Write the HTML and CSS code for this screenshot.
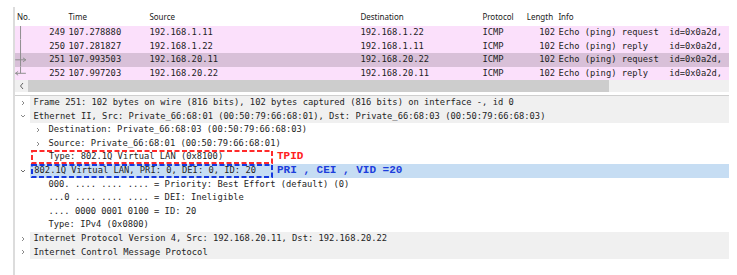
FILE: index.html
```html
<!DOCTYPE html>
<html lang="en">
<head>
  <meta charset="UTF-8">
  <title>Wireshark - 802.1Q frame</title>
  <link rel="stylesheet" href="styles.css">
</head>
<body>

<div class="capture">

  <!-- Packet list -->
  <div class="plist">
    <div class="prow phead">
      <span class="c-no">No.</span>
      <span class="c-time">Time</span>
      <span class="c-src">Source</span>
      <span class="c-dst">Destination</span>
      <span class="c-proto">Protocol</span>
      <span class="c-len">Length</span>
      <span class="c-info">Info</span>
    </div>

    <div class="prow pkt">
      <span class="c-no"><svg class="rel" width="14" height="14" viewBox="0 0 14 14"><path d="M5.5 0V14" stroke="#8c8c8c" stroke-width="1"/></svg>249</span>
      <span class="c-time">107.278880</span>
      <span class="c-src">192.168.1.11</span>
      <span class="c-dst">192.168.1.22</span>
      <span class="c-proto">ICMP</span>
      <span class="c-len">102</span>
      <span class="c-info">Echo (ping) request  id=0x0a2d,</span>
    </div>
    <div class="prow pkt">
      <span class="c-no"><svg class="rel" width="14" height="14" viewBox="0 0 14 14"><path d="M5.5 0V14" stroke="#8c8c8c" stroke-width="1"/></svg>250</span>
      <span class="c-time">107.281827</span>
      <span class="c-src">192.168.1.22</span>
      <span class="c-dst">192.168.1.11</span>
      <span class="c-proto">ICMP</span>
      <span class="c-len">102</span>
      <span class="c-info">Echo (ping) reply    id=0x0a2d,</span>
    </div>
    <div class="prow pkt current">
      <span class="c-no"><svg class="rel" width="14" height="14" viewBox="0 0 14 14"><path d="M5.5 0V14M0 7H11" stroke="#8c8c8c" stroke-width="1"/><path d="M8 5L11 7L8 9" fill="none" stroke="#8c8c8c" stroke-width="1"/></svg>251</span>
      <span class="c-time">107.993503</span>
      <span class="c-src">192.168.20.11</span>
      <span class="c-dst">192.168.20.22</span>
      <span class="c-proto">ICMP</span>
      <span class="c-len">102</span>
      <span class="c-info">Echo (ping) request  id=0x0a2d,</span>
    </div>
    <div class="prow pkt">
      <span class="c-no"><svg class="rel" width="14" height="14" viewBox="0 0 14 14"><path d="M5.5 0V6.5M0 6.5H11" stroke="#8c8c8c" stroke-width="1"/><path d="M3 4.5L0.5 6.5L3 8.5" fill="none" stroke="#8c8c8c" stroke-width="1"/></svg>252</span>
      <span class="c-time">107.997203</span>
      <span class="c-src">192.168.20.22</span>
      <span class="c-dst">192.168.20.11</span>
      <span class="c-proto">ICMP</span>
      <span class="c-len">102</span>
      <span class="c-info">Echo (ping) reply    id=0x0a2d,</span>
    </div>
  </div>

  <div class="hscroll">
    <span class="sb-btn"><svg width="6" height="8" viewBox="0 0 6 8"><path d="M4 1L1.5 4L4 7" fill="none" stroke="#606060" stroke-width="1"/></svg></span>
    <span class="sb-thumb"></span>
  </div>

  <div class="split"></div>

  <!-- Packet details -->
  <div class="tree">
    <div class="node top">
      <span class="twisty"><svg width="6" height="6" viewBox="0 0 6 6"><path d="M2 1L4 3L2 5" fill="none" stroke="#8a8a8a" stroke-width="1"/></svg></span>
      <span class="text">Frame 251: 102 bytes on wire (816 bits), 102 bytes captured (816 bits) on interface -, id 0</span>
    </div>
    <div class="node top">
      <span class="twisty"><svg width="6" height="6" viewBox="0 0 6 6"><path d="M1 2L3 4L5 2" fill="none" stroke="#8a8a8a" stroke-width="1"/></svg></span>
      <span class="text">Ethernet II, Src: Private_66:68:01 (00:50:79:66:68:01), Dst: Private_66:68:03 (00:50:79:66:68:03)</span>
    </div>
    <div class="node sub">
      <span class="twisty"><svg width="6" height="6" viewBox="0 0 6 6"><path d="M2 1L4 3L2 5" fill="none" stroke="#8a8a8a" stroke-width="1"/></svg></span>
      <span class="text">Destination: Private_66:68:03 (00:50:79:66:68:03)</span>
    </div>
    <div class="node sub">
      <span class="twisty"><svg width="6" height="6" viewBox="0 0 6 6"><path d="M2 1L4 3L2 5" fill="none" stroke="#8a8a8a" stroke-width="1"/></svg></span>
      <span class="text">Source: Private_66:68:01 (00:50:79:66:68:01)</span>
    </div>
    <div class="node marked">
      <span class="mark mark-red"><svg class="dash" width="242" height="14" viewBox="0 0 242 14"><rect x="1" y="1" width="240" height="12" fill="none" stroke="#ff2a2a" stroke-width="2" stroke-dasharray="5 2.5"/></svg><span class="mark-text sub-text">Type: 802.1Q Virtual LAN (0x8100)</span></span>
      <span class="note note-red">TPID</span>
    </div>
    <div class="node marked selected">
      <span class="twisty"><svg width="6" height="6" viewBox="0 0 6 6"><path d="M1 2L3 4L5 2" fill="none" stroke="#6a6a6a" stroke-width="1"/></svg></span>
      <span class="sel-line">
        <span class="mark mark-blue"><svg class="dash" width="242" height="14" viewBox="0 0 242 14"><rect x="1" y="1" width="240" height="12" fill="none" stroke="#1438e0" stroke-width="2" stroke-dasharray="5 2.5"/></svg><span class="mark-text">802.1Q Virtual LAN, PRI: 0, DEI: 0, ID: 20</span></span>
        <span class="note note-blue">PRI , CEI , VID =20</span>
      </span>
    </div>
    <div class="node leaf"><span class="text">000. .... .... .... = Priority: Best Effort (default) (0)</span></div>
    <div class="node leaf"><span class="text">...0 .... .... .... = DEI: Ineligible</span></div>
    <div class="node leaf"><span class="text">.... 0000 0001 0100 = ID: 20</span></div>
    <div class="node leaf"><span class="text">Type: IPv4 (0x0800)</span></div>
    <div class="node top">
      <span class="twisty"><svg width="6" height="6" viewBox="0 0 6 6"><path d="M2 1L4 3L2 5" fill="none" stroke="#8a8a8a" stroke-width="1"/></svg></span>
      <span class="text">Internet Protocol Version 4, Src: 192.168.20.11, Dst: 192.168.20.22</span>
    </div>
    <div class="node top">
      <span class="twisty"><svg width="6" height="6" viewBox="0 0 6 6"><path d="M2 1L4 3L2 5" fill="none" stroke="#8a8a8a" stroke-width="1"/></svg></span>
      <span class="text">Internet Control Message Protocol</span>
    </div>
  </div>

</div>

</body>
</html>
```

FILE: styles.css
```css
body {
  margin: 0;
  padding-top: 7px;
  background: #ffffff;
  font-family: "DejaVu Sans Mono", monospace;
  font-size: 8.77px;
  color: #1e1e1e;
}
.capture {
  margin-left: 13px;
  width: 714px;
  height: 268px;
  border-left: 2px solid #dcdcdc;
}

/* packet list */
.prow {
  display: grid;
  grid-template-columns: 51px 81px 211px 122px 44px 32px 1fr;
  height: 13.6px;
  line-height: 13.6px;
  white-space: pre;
}
.prow span {
  overflow: hidden;
  padding-left: 2.4px;
}
.prow .c-no,
.prow .c-len {
  text-align: right;
  padding-left: 0;
  padding-right: 1px;
}
.prow .c-no {
  position: relative;
}
.phead {
  height: 19px;
  line-height: 19px;
  font-family: "Noto Sans", "Liberation Sans", sans-serif;
  font-size: 8px;
  color: #1a1a1a;
}
.phead .c-no {
  text-align: left;
  padding-left: 2px;
}
.phead .c-len {
  text-align: left;
  padding-left: 2.7px;
}
.pkt {
  background: #fbe0fb;
}
.pkt.current {
  background: #d8c0d8;
}
.rel {
  position: absolute;
  left: 0;
  top: 0;
  height: 13.6px;
}

.hscroll {
  display: flex;
  height: 12px;
  background: #f0f0f0;
}
.sb-btn {
  width: 13px;
  display: flex;
  align-items: center;
  justify-content: center;
}
.sb-thumb {
  width: 581px;
  background: #cdcdcd;
}
.split {
  margin-top: 2.6px;
  height: 1px;
  background: #cfcfcf;
}

/* packet details */
.node {
  display: flex;
  align-items: center;
  height: 13.6px;
  line-height: 13.6px;
  white-space: pre;
}
.twisty {
  width: 15px;
  flex: none;
  display: flex;
  align-items: center;
  justify-content: center;
}
.twisty svg {
  display: block;
}
.text {
  flex: 1;
  padding-left: 3.5px;
}
.top .text {
  background: #f0f0f0;
}
.sub {
  padding-left: 15px;
}
.leaf {
  padding-left: 30px;
}
.marked {
  padding-left: 16px;
}
.selected {
  padding-left: 0;
}
.sel-line {
  flex: 1;
  display: flex;
  align-items: center;
  height: 13.6px;
  padding-left: 1px;
  background: #c6ddf3;
}
.mark {
  position: relative;
  display: block;
  width: 242px;
  height: 13.6px;
  flex: none;
}
.dash {
  position: absolute;
  left: 0;
  top: -0.2px;
}
.mark-text {
  position: relative;
  padding-left: 3.3px;
}
.mark-text.sub-text {
  padding-left: 18px;
}
.note {
  padding-left: 4px;
  font-family: "Liberation Mono", "DejaVu Sans Mono", monospace;
  font-size: 11px;
  font-weight: bold;
}
.note-red {
  color: #ff2020;
}
.note-blue {
  color: #1c3ddc;
}
```
